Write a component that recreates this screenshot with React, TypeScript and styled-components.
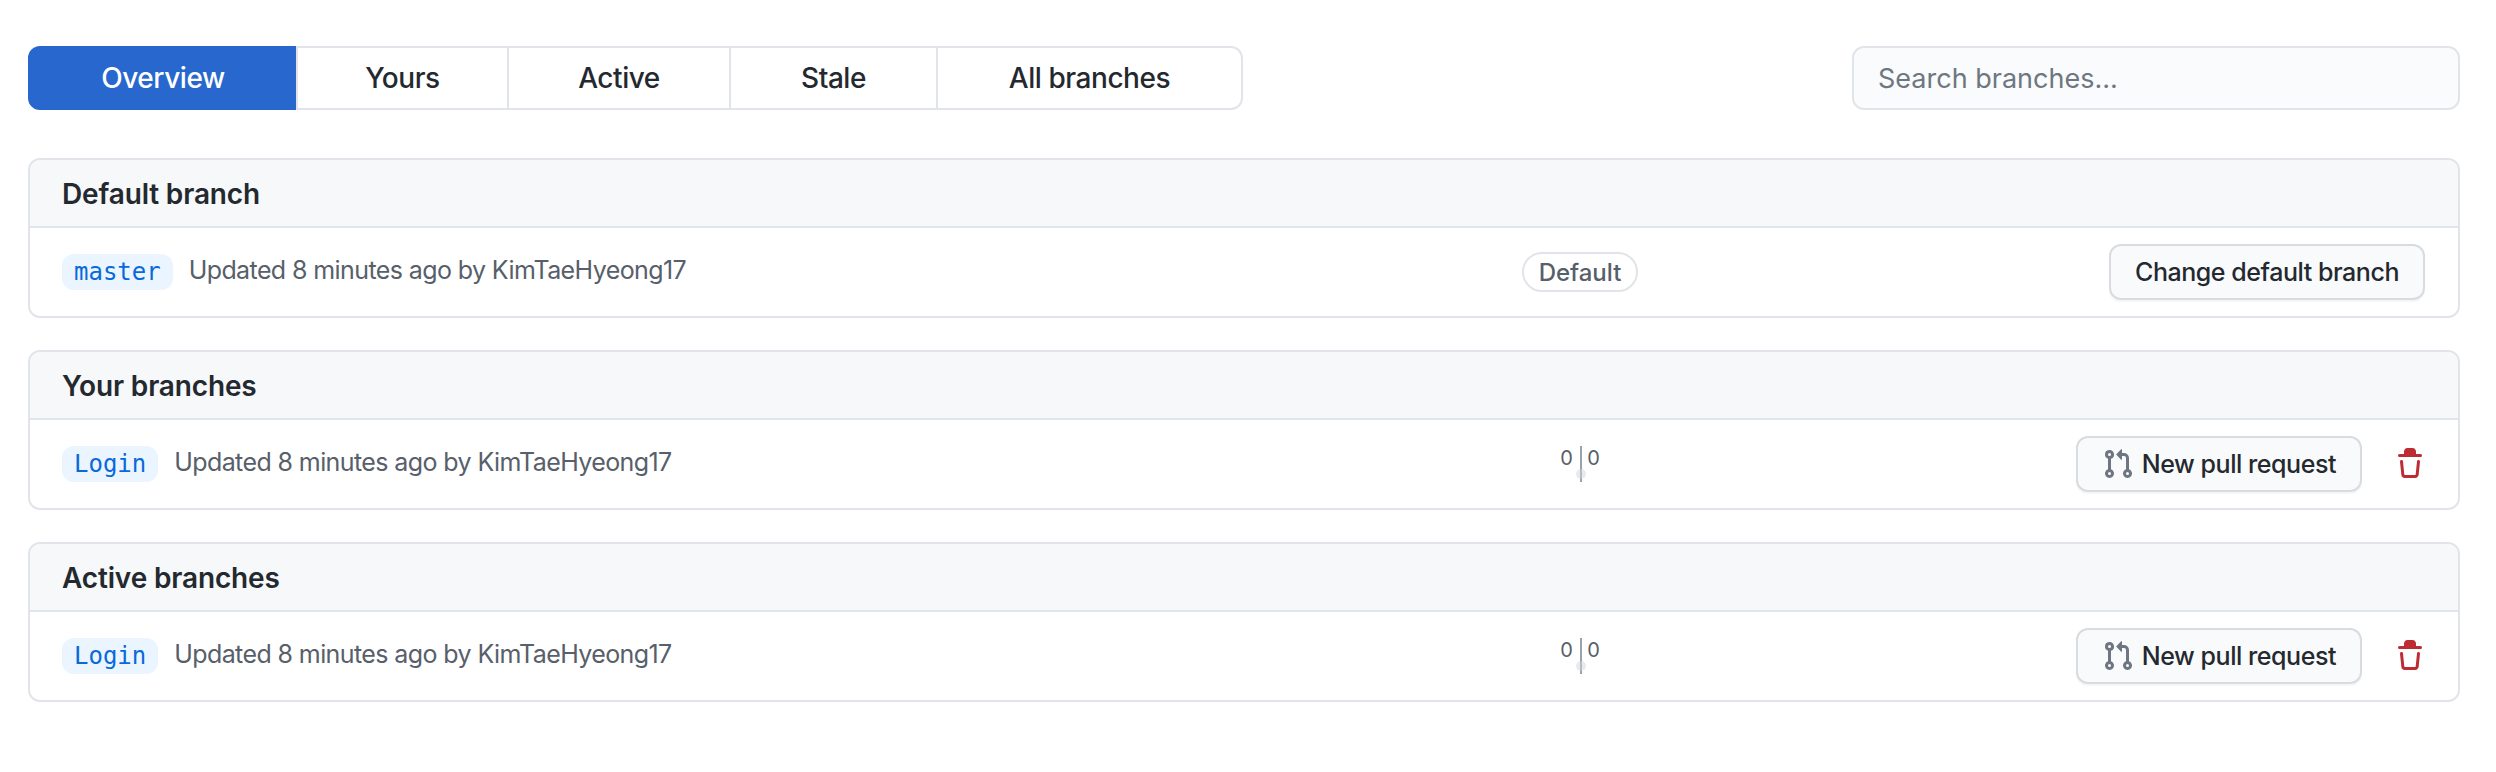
import styled, { createGlobalStyle } from 'styled-components';

const GlobalStyle = createGlobalStyle`
  html, body {
    margin: 0;
    background: #fff;
  }
  body {
    font-family: Inter, "Liberation Sans", sans-serif;
    color: #24292f;
  }
`;

const Page = styled.div`
  width: 2496px;
  height: 772px;
  padding: 46px 36px 0 28px;
  box-sizing: border-box;
  display: flex;
  flex-direction: column;
  gap: 48px;
`;

const Toolbar = styled.div`
  display: flex;
  justify-content: space-between;
  align-items: center;
`;

const Tabs = styled.nav`
  display: flex;
  height: 64px;
`;

const Tab = styled.a<{ $width: number; $active?: boolean }>`
  width: ${(p) => p.$width}px;
  box-sizing: border-box;
  display: flex;
  align-items: center;
  justify-content: center;
  font-size: 28px;
  font-weight: 500;
  letter-spacing: -0.45px;
  color: ${(p) => (p.$active ? '#fff' : '#24292f')};
  background: ${(p) => (p.$active ? '#2767ce' : '#fff')};
  border: 2px solid ${(p) => (p.$active ? '#2767ce' : '#e1e4e8')};
  margin-left: -2px;

  &:first-child {
    margin-left: 0;
    border-radius: 12px 0 0 12px;
  }

  &:last-child {
    border-radius: 0 12px 12px 0;
  }
`;

const SearchInput = styled.input`
  width: 608px;
  height: 64px;
  box-sizing: border-box;
  padding: 0 24px;
  border: 2px solid #e1e4e8;
  border-radius: 12px;
  background: #fafbfc;
  font-family: inherit;
  font-size: 27px;
  outline: none;

  &::placeholder {
    color: #6e7781;
    opacity: 1;
  }
`;

const Sections = styled.div`
  display: flex;
  flex-direction: column;
  gap: 32px;
`;

const Card = styled.section`
  border: 2px solid #e1e4e8;
  border-radius: 12px;
  overflow: hidden;
`;

const CardHeader = styled.h3`
  margin: 0;
  height: 68px;
  padding: 2px 32px 0;
  box-sizing: border-box;
  display: flex;
  align-items: center;
  background: #f6f8fa;
  border-bottom: 2px solid #e1e4e8;
  font-size: 28px;
  font-weight: 600;
  letter-spacing: -0.15px;
  color: #24292f;
`;

const Row = styled.div`
  height: 88px;
  display: grid;
  grid-template-columns: 1450px 200px 1fr;
  align-items: center;
`;

const BranchCell = styled.div`
  padding-left: 32px;
  display: flex;
  align-items: center;
  gap: 16px;
`;

const BranchName = styled.a`
  height: 36px;
  padding: 0 12px;
  border-radius: 12px;
  display: flex;
  align-items: center;
  background: #eaf5ff;
  color: #0969da;
  font-family: "DejaVu Sans Mono", "Liberation Mono", monospace;
  font-size: 24px;
`;

const UpdatedText = styled.span`
  font-size: 25px;
  letter-spacing: -0.6px;
  color: #57606a;
  position: relative;
  top: -2px;
`;

const MiddleCell = styled.div`
  display: flex;
  justify-content: center;
`;

const DefaultLabel = styled.span`
  height: 40px;
  padding: 0 15px;
  box-sizing: border-box;
  border: 2px solid #e1e4e8;
  border-radius: 999px;
  display: flex;
  align-items: center;
  font-size: 24px;
  font-weight: 500;
  color: #57606a;
`;

const Counts = styled.div`
  position: relative;
  height: 36px;
  display: flex;
  font-size: 20px;
  color: #57606a;
`;

const Count = styled.span`
  width: 13px;
  line-height: 24px;
  text-align: center;
`;

const Divider = styled.span`
  width: 2px;
  margin: 0 5px 0 7px;
  background: #9aa1a9;
`;

const Dot = styled.span`
  position: absolute;
  left: 50%;
  top: 23px;
  width: 10px;
  height: 10px;
  margin-left: -4px;
  border-radius: 50%;
  background: rgba(208, 215, 222, 0.5);
`;

const ActionsCell = styled.div<{ $inset: number }>`
  padding-right: ${(p) => p.$inset}px;
  display: flex;
  justify-content: flex-end;
  align-items: center;
  gap: 32px;
`;

const Button = styled.button`
  height: 56px;
  padding: 0 24px;
  box-sizing: border-box;
  display: inline-flex;
  align-items: center;
  gap: 8px;
  border: 2px solid #d8dbdf;
  border-radius: 12px;
  background: #f9fafc;
  box-shadow: 0 2px 0 rgba(27, 31, 36, 0.04);
  font-family: inherit;
  font-size: 25px;
  font-weight: 500;
  letter-spacing: -0.45px;
  color: #24292f;
`;

const Icon = styled.svg<{ $color: string }>`
  width: 32px;
  height: 32px;
  flex: 0 0 auto;
  fill: ${(p) => p.$color};
`;

const IconButton = styled.button`
  padding: 0;
  border: none;
  background: transparent;
  display: flex;
`;

const PullRequestIcon = () => (
  <Icon viewBox="0 0 16 16" $color="#6e7781">
    <path d="M1.5 3.25a2.25 2.25 0 1 1 3 2.122v5.256a2.251 2.251 0 1 1-1.5 0V5.372A2.25 2.25 0 0 1 1.5 3.25Zm5.677-.177L9.573.677A.25.25 0 0 1 10 .854V2.5h1A2.5 2.5 0 0 1 13.5 5v5.628a2.251 2.251 0 1 1-1.5 0V5a1 1 0 0 0-1-1h-1v1.646a.25.25 0 0 1-.427.177L7.177 3.427a.25.25 0 0 1 0-.354ZM3.75 2.5a.75.75 0 1 0 0 1.5.75.75 0 0 0 0-1.5Zm0 9.5a.75.75 0 1 0 0 1.5.75.75 0 0 0 0-1.5Zm8.25.75a.75.75 0 1 0 1.5 0 .75.75 0 0 0-1.5 0Z" />
  </Icon>
);

const TrashIcon = () => (
  <Icon viewBox="0 0 16 16" $color="#bd2c33">
    <path d="M6.5 1.75a.25.25 0 0 1 .25-.25h2.5a.25.25 0 0 1 .25.25V3h-3V1.75zm4.5 0V3h2.25a.75.75 0 0 1 0 1.5H2.75a.75.75 0 0 1 0-1.5H5V1.75C5 .784 5.784 0 6.75 0h2.5C10.216 0 11 .784 11 1.75zM4.496 6.675a.75.75 0 1 0-1.492.15l.66 6.6A1.75 1.75 0 0 0 5.405 15h5.19c.9 0 1.652-.681 1.741-1.576l.66-6.6a.75.75 0 0 0-1.492-.149l-.66 6.6a.25.25 0 0 1-.249.225h-5.19a.25.25 0 0 1-.249-.225l-.66-6.6z" />
  </Icon>
);

function BranchInfo({ name }: { name: string }) {
  return (
    <BranchCell>
      <BranchName>{name}</BranchName>
      <UpdatedText>Updated 8 minutes ago by KimTaeHyeong17</UpdatedText>
    </BranchCell>
  );
}

function BranchRow({ name }: { name: string }) {
  return (
    <Row>
      <BranchInfo name={name} />
      <MiddleCell>
        <Counts>
          <Count>0</Count>
          <Divider />
          <Count>0</Count>
          <Dot />
        </Counts>
      </MiddleCell>
      <ActionsCell $inset={32}>
        <Button type="button">
          <PullRequestIcon />
          New pull request
        </Button>
        <IconButton type="button" aria-label="Delete branch">
          <TrashIcon />
        </IconButton>
      </ActionsCell>
    </Row>
  );
}

export default function App() {
  return (
    <Page>
      <GlobalStyle />
      <Toolbar>
        <Tabs>
          <Tab $width={270} $active>Overview</Tab>
          <Tab $width={213}>Yours</Tab>
          <Tab $width={224}>Active</Tab>
          <Tab $width={209}>Stale</Tab>
          <Tab $width={307}>All branches</Tab>
        </Tabs>
        <SearchInput placeholder="Search branches..." />
      </Toolbar>

      <Sections>
        <Card>
          <CardHeader>Default branch</CardHeader>
          <Row>
            <BranchInfo name="master" />
            <MiddleCell>
              <DefaultLabel>Default</DefaultLabel>
            </MiddleCell>
            <ActionsCell $inset={33}>
              <Button type="button">Change default branch</Button>
            </ActionsCell>
          </Row>
        </Card>

        <Card>
          <CardHeader>Your branches</CardHeader>
          <BranchRow name="Login" />
        </Card>

        <Card>
          <CardHeader>Active branches</CardHeader>
          <BranchRow name="Login" />
        </Card>
      </Sections>
    </Page>
  );
}
